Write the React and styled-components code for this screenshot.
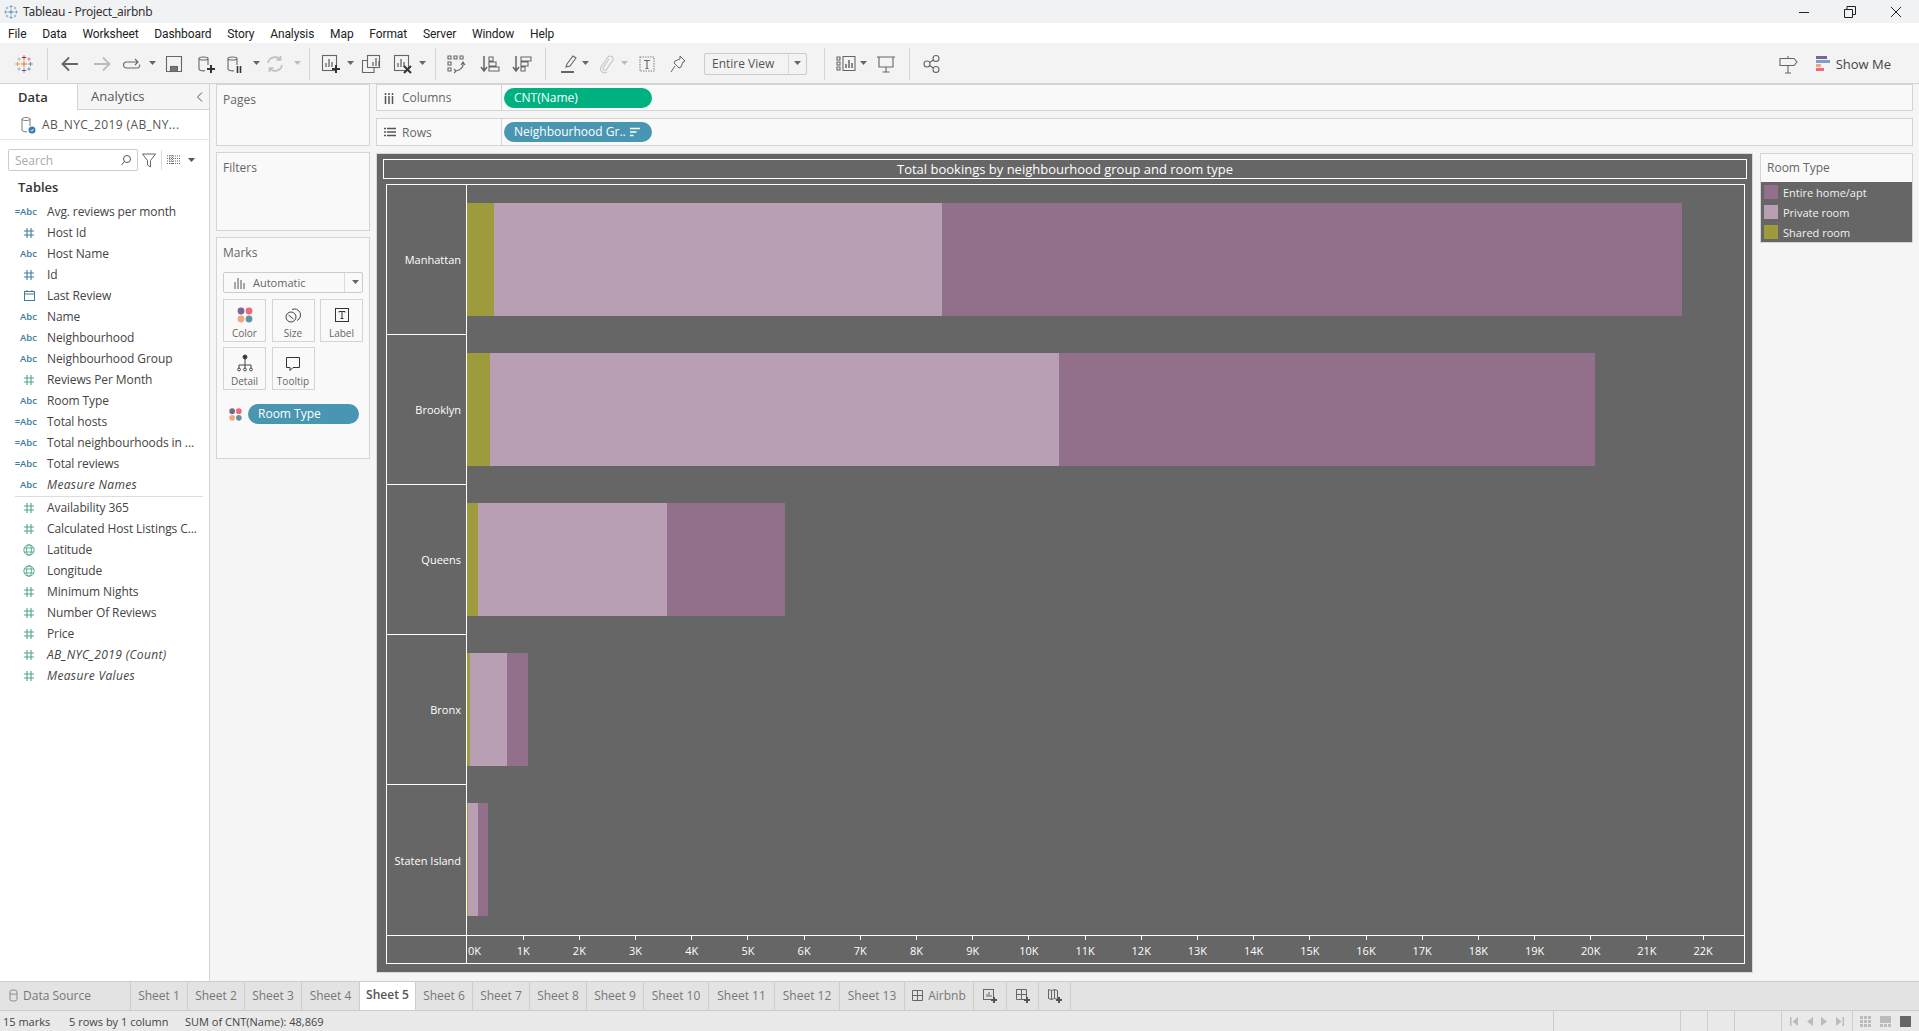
import React from 'react'
import styled, { createGlobalStyle } from 'styled-components'

const GlobalStyle = createGlobalStyle`
    html, body { margin: 0; padding: 0; height: 100%; overflow: hidden; }
    body { font-family: "Open Sans", "Liberation Sans", sans-serif; font-size: 12px; color: #444; }
    * { box-sizing: border-box; }
`
const PX_PER_K = 56.2
const BAR_PX_PER_K = 56.1
const COLORS = { entire: '#926f8b', priv: '#b99fb4', shared: '#9e9b3d' }

const Page = styled.div`
    width: 1919px;
    height: 1031px;
    display: flex;
    flex-direction: column;
    background: #f5f5f5;
    overflow: hidden;
`
/* title bar + menu */
const TitleBar = styled.div`
    height: 23px;
    flex: none;
    display: flex;
    align-items: center;
    background: #f1f2f3;
    padding-left: 3px;
    font-size: 12px;
    color: #333;
`
const TitleText = styled.span`
    margin-left: 4px;
    flex: 1;
    font-family: "Noto Sans", sans-serif;
    letter-spacing: -0.25px;
`
const WinButton = styled.div`
    width: 46px;
    height: 23px;
    display: flex;
    align-items: center;
    justify-content: center;
`
const MenuBar = styled.div`
    height: 20px;
    flex: none;
    background: #fff;
    display: flex;
    align-items: center;
    gap: 15.8px;
    padding: 2px 0 0 8px;
    font-family: "Roboto", sans-serif;
    font-size: 12px;
    letter-spacing: -0.1px;
    color: #222;
`
const Toolbar = styled.div`
    height: 41px;
    flex: none;
    display: flex;
    align-items: center;
    padding: 0 28px 0 14px;
    background: #f3f3f3;
`
const ToolSvg = styled.svg`
    flex: none;
    margin-left: ${props => props.$ml || 0}px;
`
const ToolSep = styled.div`
    flex: none;
    width: 1px;
    height: 32px;
    background: #d4d4d4;
    margin-left: ${props => props.$ml}px;
`
const FitSelect = styled.div`
    flex: none;
    width: 103px;
    height: 22px;
    margin-left: 16px;
    display: flex;
    align-items: center;
    border: 1px solid #ccc;
    border-radius: 2px;
    font-size: 12px;
    color: #555;
`
const FitText = styled.div`
    width: 84px;
    padding-left: 7px;
    line-height: 20px;
    border-right: 1px solid #d8d8d8;
`
const Spacer = styled.div`
    flex: 1;
`
const ShowMe = styled.div`
    display: flex;
    align-items: center;
    gap: 6px;
    margin-left: 17px;
    font-size: 13px;
    color: #444;
`
/* main three columns */
const Main = styled.div`
    flex: 1;
    min-height: 0;
    display: flex;
    border-top: 1px solid #d4d4d4;
    margin-top: -1px;
`
const Sidebar = styled.aside`
    width: 210px;
    flex: none;
    background: #fff;
    border-right: 1px solid #d4d4d4;
`
const SideTabs = styled.div`
    height: 26px;
    display: flex;
    align-items: center;
`
const SideTab = styled.div`
    height: 26px;
    width: ${props => props.$w}px;
    line-height: 25px;
    padding-left: ${props => props.$pad}px;
    font-size: 13px;
    font-weight: ${props => props.$active ? 600 : 400};
    color: ${props => props.$active ? '#333' : '#555'};
    background: ${props => props.$active ? '#fff' : '#f5f5f5'};
    border-bottom: ${props => props.$active ? 'none' : '1px solid #d4d4d4'};
    border-right: ${props => props.$active ? '1px solid #d4d4d4' : 'none'};
    flex: ${props => props.$grow ? 1 : 'none'};
    display: flex;
    justify-content: space-between;
    align-items: center;
    padding-right: 5px;
`
const SourceRow = styled.div`
    height: 30px;
    display: flex;
    align-items: center;
    padding-left: 21px;
    gap: 6px;
    border-bottom: 1px solid #e6e6e6;
    font-size: 12px;
    letter-spacing: 0.4px;
    color: #555;
`
const SearchRow = styled.div`
    display: flex;
    align-items: center;
    padding: 9px 0 0 8px;
`
const SearchBox = styled.div`
    width: 130px;
    height: 22px;
    border: 1px solid #ccc;
    border-radius: 2px;
    display: flex;
    align-items: center;
    justify-content: space-between;
    padding: 0 5px 0 6px;
    color: #aaa;
    font-size: 12px;
`
const SmallSep = styled.div`
    width: 1px;
    height: 20px;
    background: #ddd;
    margin: 0 5px 0 5px;
`
const TablesHead = styled.div`
    margin: 6px 0 4px 18px;
    height: 20px;
    line-height: 20px;
    font-size: 13px;
    font-weight: 600;
    color: #333;
`
const Field = styled.div`
    height: 21px;
    display: flex;
    align-items: center;
    font-size: 12px;
    color: #444;
    font-style: ${props => props.$italic ? 'italic' : 'normal'};
    letter-spacing: ${props => props.$italic ? '0.35px' : '-0.1px'};
    white-space: nowrap;
`
const FieldIcon = styled.div`
    width: 47px;
    padding-right: 10px;
    flex: none;
    display: flex;
    justify-content: flex-end;
    align-items: center;
    font-style: normal;
    letter-spacing: 0;
    font-size: 9.5px;
    font-weight: 600;
    color: #3f7c9b;
    white-space: pre;
`
const GlyphSlot = styled.div`
    width: 16px;
    display: flex;
    justify-content: center;
`
const FieldDivider = styled.div`
    height: 1px;
    margin: 1px 6px 0 15px;
    background: #ddd;
`
const CardColumn = styled.div`
    width: 154px;
    flex: none;
    margin-left: 6px;
    display: flex;
    flex-direction: column;
    gap: 6px;
`
const Card = styled.div`
    height: ${props => props.$h}px;
    flex: none;
    background: #f9f9f9;
    border: 1px solid #d4d4d4;
    padding: 5px 6px;
`
const CardTitle = styled.div`
    height: 20px;
    line-height: 20px;
    font-size: 12px;
    color: #666;
`
const MarkSelect = styled.div`
    margin-top: 9px;
    width: 140px;
    height: 21px;
    border: 1px solid #ccc;
    border-radius: 2px;
    display: flex;
    align-items: center;
    font-size: 11px;
    color: #666;
`
const MarkSelectText = styled.div`
    width: 121px;
    flex: none;
    height: 19px;
    display: flex;
    align-items: center;
    gap: 8px;
    padding-left: 10px;
    border-right: 1px solid #ddd;
`
const MarkGrid = styled.div`
    margin-top: 6px;
    display: grid;
    grid-template-columns: repeat(3, 43px);
    grid-auto-rows: 43px;
    gap: 5px 5.5px;
`
const MarkButton = styled.div`
    border: 1px solid #d4d4d4;
    display: flex;
    flex-direction: column;
    align-items: center;
    padding-top: 6px;
    font-size: 10px;
    line-height: 12px;
    color: #666;
    gap: 3px;
`
const EncodingRow = styled.div`
    margin: 14px 0 0 5px;
    display: flex;
    align-items: center;
    gap: 5px;
`
const Pill = styled.div`
    width: ${props => props.$w}px;
    height: 20px;
    border-radius: 10px;
    background: ${props => props.$color};
    color: #fff;
    font-size: 12px;
    line-height: 20px;
    padding-left: 10px;
    display: flex;
    align-items: center;
    gap: 4px;
    white-space: nowrap;
`
const Workspace = styled.div`
    flex: 1;
    min-width: 0;
    margin: 0 6px 0 6px;
    display: flex;
    flex-direction: column;
`
const Shelf = styled.div`
    height: ${props => props.$h}px;
    flex: none;
    margin-bottom: 7px;
    background: #f9f9f9;
    border: 1px solid #d4d4d4;
    display: flex;
    align-items: center;
`
const ShelfLabel = styled.div`
    width: 125px;
    height: 100%;
    border-right: 1px solid #d4d4d4;
    display: flex;
    align-items: center;
    padding-left: 7px;
    margin-right: 2px;
    font-size: 12px;
    color: #666;
`
const ShelfIcon = styled.div`
    width: 18px;
    flex: none;
    display: flex;
    align-items: center;
`
const ViewRow = styled.div`
    flex: 1;
    min-height: 0;
    display: flex;
    gap: 7px;
    padding-bottom: 8px;
`
const ViewPanel = styled.div`
    width: 1377px;
    flex: none;
    background: #666;
    border: 1px solid #d8d8d8;
    padding: 5px 5px 8px 6px;
    display: flex;
    flex-direction: column;
    gap: 5px;
    color: #fff;
`
const ChartTitle = styled.div`
    height: 20px;
    flex: none;
    border: 1px solid #fff;
    text-align: center;
    line-height: 18px;
    font-size: 13px;
`
const ChartFrame = styled.div`
    flex: 1;
    min-height: 0;
    margin: 0 2px 0 3px;
    border: 1px solid #fff;
    display: flex;
    flex-direction: column;
`
const ChartRow = styled.div`
    height: 150px;
    flex: none;
    display: flex;
`
const RowHeader = styled.div`
    width: 80px;
    flex: none;
    border-right: 1px solid #fff;
    border-bottom: ${props => props.$last ? 'none' : '1px solid #fff'};
    display: flex;
    align-items: center;
    justify-content: flex-end;
    padding-right: 5px;
    font-size: 11px;
    white-space: nowrap;
`
const Plot = styled.div`
    flex: 1;
    display: flex;
    align-items: center;
`
const Segment = styled.div`
    height: 113px;
    flex: none;
    margin-top: -1px;
    background: ${props => props.$color};
`
const AxisRow = styled.div`
    flex: 1;
    display: flex;
    border-top: 1px solid #fff;
`
const AxisHead = styled.div`
    width: 80px;
    flex: none;
    border-right: 1px solid #fff;
`
const AxisZero = styled.div`
    width: ${PX_PER_K / 2}px;
    flex: none;
    padding: 8px 0 0 1px;
    font-size: 11px;
    line-height: 14px;
`
const Tick = styled.div`
    width: ${PX_PER_K}px;
    flex: none;
    display: flex;
    flex-direction: column;
    align-items: center;
    font-size: 11px;
    line-height: 14px;
    gap: 4px;
    &::before {
        content: '';
        width: 1px;
        height: 4px;
        background: #fff;
    }
`
const Legend = styled.div`
    width: 153px;
    height: 90px;
    flex: none;
    border: 1px solid #d4d4d4;
    background: #f9f9f9;
`
const LegendHead = styled.div`
    height: 28px;
    line-height: 28px;
    padding-left: 6px;
    font-size: 12px;
    color: #666;
`
const LegendList = styled.div`
    background: #666;
    padding: 3px;
    display: flex;
    flex-direction: column;
    gap: 6px;
`
const LegendItem = styled.div`
    height: 14px;
    display: flex;
    align-items: center;
    gap: 5px;
    font-size: 11px;
    color: #f2f2f2;
`
const Swatch = styled.div`
    width: 14px;
    height: 14px;
    background: ${props => props.$color};
`
/* bottom */
const TabStrip = styled.div`
    height: 30px;
    flex: none;
    display: flex;
    background: #e3e3e3;
    border-top: 1px solid #ccc;
    border-bottom: 1px solid #ccc;
`
const SheetTab = styled.div`
    width: ${props => props.$w}px;
    flex: none;
    display: flex;
    align-items: center;
    justify-content: ${props => props.$left ? 'flex-start' : 'center'};
    gap: 5px;
    padding-left: ${props => props.$left ? 9 : 0}px;
    border-right: 1px solid #ccc;
    background: ${props => props.$active ? '#fff' : 'transparent'};
    color: ${props => props.$active ? '#555' : '#777'};
    font-weight: ${props => props.$active ? 600 : 400};
    font-size: 12px;
    padding-bottom: ${props => props.$active ? 3 : 1}px;
    white-space: nowrap;
`
const StatusBar = styled.div`
    height: 20px;
    flex: none;
    display: flex;
    align-items: center;
    background: #e9e9e9;
    font-size: 11px;
    color: #444;
    padding-left: 3px;
`
const StatusText = styled.span`
    width: ${props => props.$w}px;
    flex: none;
    white-space: nowrap;
`
const StatusCell = styled.div`
    width: ${props => props.$w}px;
    height: 20px;
    flex: none;
    border-left: 1px solid #ccc;
    display: flex;
    align-items: center;
    justify-content: space-around;
    padding: 0 ${props => props.$pad || 0}px;
`

const Ico = ({ ml, w = 20, h = 20, children, color = '#666', sw = 1.1 }) => (
    <ToolSvg $ml={ml} width={w} height={h} viewBox={`0 0 ${w} ${h}`} fill="none" stroke={color} strokeWidth={sw}>
        {children}
    </ToolSvg>
)
const Caret = ({ ml, color = '#666' }) => (
    <ToolSvg $ml={ml} width="7" height="5" viewBox="0 0 7 5"><path d="M0 0h7L3.5 4z" fill={color} /></ToolSvg>
)
const Db = ({ color = '#666' }) => (
    <path d="M3 4.500C3 2.500 12 2.500 12 4.500V11M3 4.500c0 2 9 2 9 0M3 4.500V15c0 1.500 3 2 6 1.800" stroke={color} />
)
const Plus = ({ x, y, s = 4 }) => (
    <path d={`M${x - s} ${y}h${2 * s}M${x} ${y - s}v${2 * s}`} stroke="#333" strokeWidth="2" />
)
const Bars = ({ x = 0, y = 0 }) => (
    <path d={`M${x + 5} ${y + 13}v-4M${x + 8} ${y + 13}v-8M${x + 11} ${y + 13}v-5`} strokeWidth="1.300" />
)

const crossList = [
    [10, 10, 3.2, 1, '#e8762c'], [10, 3.5, 2.2, .8, '#c72037'], [16.5, 10, 2.2, .8, '#5b879b'],
    [10, 16.5, 2.2, .8, '#5c6692'], [3.5, 10, 2.2, .8, '#eb912b'], [5, 5, 1.6, .6, '#7099a6'],
    [15, 5, 1.6, .6, '#c72037'], [15, 15, 1.6, .6, '#1f457e'], [5, 15, 1.6, .6, '#59879b'],
]
const TableauLogo = ({ ml, mono, size = 20 }) => (
    <ToolSvg $ml={ml} width={size} height={size} viewBox="0 0 20 20">
        {crossList.map(([x, y, r, t, c]) => (
            <path key={`${x}-${y}`} fill={mono || c} d={`M${x - t / 2} ${y - r}h${t}v${r * 2}h${-t}zM${x - r} ${y - t / 2}h${r * 2}v${t}h${-r * 2}z`} />
        ))}
    </ToolSvg>
)
const Dots = ({ size = 18 }) => (
    <ToolSvg width={size} height={size} viewBox="0 0 18 18">
        <circle cx="5" cy="5" r="3.4" fill="#7b6690" /><circle cx="13" cy="5" r="3.4" fill="#f2677b" />
        <circle cx="5" cy="13" r="3.4" fill="#f2a67a" /><circle cx="13" cy="13" r="3.4" fill="#5f94a3" />
    </ToolSvg>
)
const Hash = ({ color }) => (
    <ToolSvg width="10" height="10" viewBox="0 0 10 10" fill="none" stroke={color} strokeWidth="1.1">
        <path d="M3 0v10M7 0v10M0 3h10M0 7h10" />
    </ToolSvg>
)
const Globe = () => (
    <ToolSvg width="12" height="12" viewBox="0 0 12 12" fill="none" stroke="#4fa887" strokeWidth=".9">
        <circle cx="6" cy="6" r="5.2" /><ellipse cx="6" cy="6" rx="2.4" ry="5.2" /><path d="M1 4h10M1 8h10" />
    </ToolSvg>
)
const Calendar = () => (
    <ToolSvg width="11" height="11" viewBox="0 0 11 11" fill="none" stroke="#3f7c9b" strokeWidth="1">
        <rect x=".5" y="1.5" width="10" height="9" /><path d="M.5 4h10M3 0v2M8 0v2" />
    </ToolSvg>
)

const TEAL = '#3f7c9b'
const GREEN = '#4fa887'
const fieldsTop = [
    { t: 'Avg. reviews per month', i: '=Abc' }, { t: 'Host Id', hash: TEAL }, { t: 'Host Name', i: 'Abc' },
    { t: 'Id', hash: TEAL }, { t: 'Last Review', cal: true }, { t: 'Name', i: 'Abc' },
    { t: 'Neighbourhood', i: 'Abc' }, { t: 'Neighbourhood Group', i: 'Abc' }, { t: 'Reviews Per Month', hash: GREEN },
    { t: 'Room Type', i: 'Abc' }, { t: 'Total hosts', i: '=Abc' }, { t: 'Total neighbourhoods in ...', i: '=Abc' },
    { t: 'Total reviews', i: '=Abc' }, { t: 'Measure Names', i: 'Abc', italic: true },
]
const fieldsBottom = [
    { t: 'Availability 365', hash: GREEN }, { t: 'Calculated Host Listings C...', hash: GREEN },
    { t: 'Latitude', globe: true }, { t: 'Longitude', globe: true }, { t: 'Minimum Nights', hash: GREEN },
    { t: 'Number Of Reviews', hash: GREEN }, { t: 'Price', hash: GREEN },
    { t: 'AB_NYC_2019 (Count)', hash: GREEN, italic: true }, { t: 'Measure Values', hash: GREEN, italic: true },
]
const menus = ['File', 'Data', 'Worksheet', 'Dashboard', 'Story', 'Analysis', 'Map', 'Format', 'Server', 'Window', 'Help']
const rows = [
    { name: 'Manhattan', shared: 480, priv: 7982, entire: 13199 },
    { name: 'Brooklyn', shared: 413, priv: 10132, entire: 9559 },
    { name: 'Queens', shared: 198, priv: 3372, entire: 2096 },
    { name: 'Bronx', shared: 60, priv: 652, entire: 379 },
    { name: 'Staten Island', shared: 9, priv: 188, entire: 176 },
]
const legend = [['Entire home/apt', COLORS.entire], ['Private room', COLORS.priv], ['Shared room', COLORS.shared]]
const ticks = Array.from({ length: 22 }, (_, i) => i + 1)
const tabs = [
    ['Sheet 1', 57], ['Sheet 2', 57], ['Sheet 3', 57], ['Sheet 4', 58], ['Sheet 5', 56], ['Sheet 6', 57], ['Sheet 7', 57],
    ['Sheet 8', 57], ['Sheet 9', 57], ['Sheet 10', 65], ['Sheet 11', 66], ['Sheet 12', 65], ['Sheet 13', 65],
]

const FieldRow = ({ f }) => (
    <Field $italic={f.italic}>
        <FieldIcon>
            {f.i}
            {f.hash && <GlyphSlot><Hash color={f.hash} /></GlyphSlot>}
            {f.cal && <GlyphSlot><Calendar /></GlyphSlot>}
            {f.globe && <GlyphSlot><Globe /></GlyphSlot>}
        </FieldIcon>
        {f.t}
    </Field>
)
const Seg = ({ value, color }) => <Segment $color={color} style={{ width: (value / 1000) * BAR_PX_PER_K }} />

const App = () => {
    return (
        <Page>
            <GlobalStyle />
            <TitleBar>
                <TableauLogo mono="#3a7fb5" size={16} />
                <TitleText>Tableau - Project_airbnb</TitleText>
                <WinButton><svg width="12" height="12" fill="none" stroke="#222"><path d="M1 6.5h10" /></svg></WinButton>
                <WinButton><svg width="12" height="12" fill="none" stroke="#222"><path d="M.5 3.5h8v8h-8zM3 3V.5h8.500v8H9" /></svg></WinButton>
                <WinButton><svg width="12" height="12" fill="none" stroke="#222"><path d="M1 1l10 10M11 1L1 11" /></svg></WinButton>
            </TitleBar>
            <MenuBar>{menus.map(m => <span key={m}>{m}</span>)}</MenuBar>
            <Toolbar>
                <TableauLogo />
                <ToolSep $ml={13} />
                <Ico ml={12} sw={1.8}><path d="M18 10H3M9 3.500L2.500 10 9 16.500" /></Ico>
                <Ico ml={12} sw={1.8} color="#bbb"><path d="M2 10h15M11 3.500l6.500 6.500-6.500 6.500" /></Ico>
                <Ico ml={10}><path d="M13 5l3 3-3 3M16 8H4.500a2.500 2.500 0 0 0 0 6h11a2.500 2.500 0 0 0 2-3.500" /></Ico>
                <Caret ml={7} />
                <Ico ml={8}><path d="M2.500 2.500h15v15h-15z" /><rect x="6.500" y="12.500" width="7" height="5" fill="#777" /></Ico>
                <Ico ml={12}><Db /><Plus x={15} y={15} /></Ico>
                <Ico ml={9}><Db /><path d="M12.500 12v7M15.500 12v7" stroke="#333" strokeWidth="1.600" /></Ico>
                <Caret ml={8} />
                <Ico ml={5} color="#c0c0c0" sw={1.6}><path d="M3 9a7 7 0 0 1 12.500-3M17 11a7 7 0 0 1-12.500 3M15.500 2v4h-4M4.500 18v-4h4" /></Ico>
                <Caret ml={9} color="#bbb" />
                <ToolSep $ml={8} />
                <Ico ml={11}><rect x="1.500" y="1.500" width="14" height="15" /><Bars /><Plus x={15} y={15} /></Ico>
                <Caret ml={6} />
                <Ico ml={7}><rect x="6.500" y="1.500" width="12" height="12" /><Bars x={7} y={-1} /><path d="M6 6.500H1.500v12H13V14" /></Ico>
                <Ico ml={12}><rect x="1.500" y="1.500" width="14" height="15" /><Bars /><path d="M11 12l7 7M18 12l-7 7" stroke="#333" strokeWidth="2" /></Ico>
                <Caret ml={6} />
                <ToolSep $ml={9} />
                <Ico ml={10}><path d="M2 2h3v3H2zM8 2h3v3H8zM14 2h3v3h-3zM2 8h3v3H2zM2 14h3v3H2zM17 8c1 5-2 8-7 9M8 15l2 2-2 2M15 11l2-3 2 3" /></Ico>
                <Ico ml={14}><path d="M4 2v14M1 13l3 4 3-4" strokeWidth="1.500" /><path d="M9 3h4v4H9zM9 8h7v4H9zM9 13h10v4H9z" /></Ico>
                <Ico ml={12}><path d="M4 2v14M1 13l3 4 3-4" strokeWidth="1.500" /><path d="M9 3h10v4H9zM9 8h7v4H9zM9 13h4v4H9z" /></Ico>
                <ToolSep $ml={13} />
                <Ico ml={12}><path d="M8 13l1-3 6-8 3 2-6 8zM8 13l4-1" /><path d="M3 18h13" strokeWidth="2" /></Ico>
                <Caret ml={4} />
                <Ico ml={7} color="#c4c4c4"><path d="M13 5l-6 9a2 2 0 0 0 3 2l7-10a3 3 0 0 0-5-3L5 13a4 4 0 0 0 6 5" /></Ico>
                <Caret ml={5} color="#bbb" />
                <Ico ml={9}><rect x="3" y="3" width="14" height="14" strokeDasharray="1.500 1" stroke="#888" /><path d="M7 6.500h6M10 6.500v8M8.500 14.500h3" /></Ico>
                <Ico ml={11} sw={1}><path d="M12 2l5 5-2 1-2 5-2 1-5-5 1-2 5-2zM7 12l-4 6" /></Ico>
                <FitSelect>
                    <FitText>Entire View</FitText>
                    <ToolSvg $ml={5} width="7" height="5" viewBox="0 0 7 5"><path d="M0 0h7L3.5 4z" fill="#666" /></ToolSvg>
                </FitSelect>
                <ToolSep $ml={17} />
                <Ico ml={11}><path d="M1 3h3v3H1zM1 8h3v3H1zM1 13h3v3H1zM7 2.500h12v14H7z" /><path d="M10 14v-4M13 14V6M16 14v-5" strokeWidth="1.500" /></Ico>
                <Caret ml={4} />
                <Ico ml={9}><path d="M1 3h18M3 3v10h14V3M10 13v5M6.500 18h7" /></Ico>
                <ToolSep $ml={13} />
                <Ico ml={12}><circle cx="5" cy="10" r="3" /><circle cx="14" cy="4.500" r="3" /><circle cx="14" cy="15.500" r="3" /><path d="M7.500 8.500l4-2.500M7.500 11.500l4 2.500" /></Ico>
                <Spacer />
                <Ico><path d="M1 4.500h14l3 3.500-3 3.500H1zM9 2v2.500M9 11.500V19M6 19h6" /></Ico>
                <ShowMe>
                    <svg width="14" height="16" viewBox="0 0 14 16">
                        <rect y="0" width="11" height="3" fill="#7b6690" /><rect y="4" width="14" height="3" fill="#7c9fc9" />
                        <rect y="8" width="5" height="3" fill="#f2a67a" /><rect y="12" width="8" height="3" fill="#f2677b" />
                    </svg>
                    Show Me
                </ShowMe>
            </Toolbar>
            <Main>
                <Sidebar>
                    <SideTabs>
                        <SideTab $active $w={78} $pad={18}>Data</SideTab>
                        <SideTab $grow $pad={13}>
                            Analytics
                            <svg width="8" height="12" fill="none" stroke="#555"><path d="M6 1.500L1.500 6 6 10.500" /></svg>
                        </SideTab>
                    </SideTabs>
                    <SourceRow>
                        <svg width="15" height="18" viewBox="0 0 15 18" fill="none" stroke="#777">
                            <path d="M1 3c0-2 8-2 8 0v7M1 3c0 2 8 2 8 0M1 3v11c0 1.500 3 2 5 1.800" />
                            <circle cx="11" cy="14" r="3.500" fill="#2f7fb5" stroke="none" />
                            <path d="M9.500 14l1.200 1.200 2-2.200" stroke="#fff" />
                        </svg>
                        AB_NYC_2019 (AB_NY...
                    </SourceRow>
                    <SearchRow>
                        <SearchBox>
                            Search
                            <svg width="12" height="12" fill="none" stroke="#555"><circle cx="7" cy="5" r="3.500" /><path d="M4.500 7.500L1.500 11" /></svg>
                        </SearchBox>
                        <svg style={{ marginLeft: 4 }} width="14" height="15" fill="none" stroke="#666"><path d="M.5 1h13L8.500 7.500V14L5.500 12V7.500z" /></svg>
                        <SmallSep />
                        <svg width="13" height="10" stroke="#666"><path d="M0 1h13M0 3.500h13M0 6h13M0 8.500h13M3 0v10M5.500 0v10" strokeDasharray="1 1" /></svg>
                        <svg style={{ marginLeft: 8 }} width="7" height="5" viewBox="0 0 7 5"><path d="M0 0h7L3.500 4z" fill="#555" /></svg>
                    </SearchRow>
                    <TablesHead>Tables</TablesHead>
                    {fieldsTop.map(f => <FieldRow key={f.t} f={f} />)}
                    <FieldDivider />
                    {fieldsBottom.map(f => <FieldRow key={f.t} f={f} />)}
                </Sidebar>
                <CardColumn>
                    <Card $h={62}><CardTitle>Pages</CardTitle></Card>
                    <Card $h={79}><CardTitle>Filters</CardTitle></Card>
                    <Card $h={222}>
                        <CardTitle>Marks</CardTitle>
                        <MarkSelect>
                            <MarkSelectText>
                                <svg width="11" height="12" stroke="#555"><path d="M1 12V5M4 12V1M7 12V3M10 12V6" /></svg>
                                Automatic
                            </MarkSelectText>
                            <ToolSvg $ml={7} width="7" height="5" viewBox="0 0 7 5"><path d="M0 0h7L3.5 4z" fill="#666" /></ToolSvg>
                        </MarkSelect>
                        <MarkGrid>
                            <MarkButton><Dots />Color</MarkButton>
                            <MarkButton>
                                <svg width="18" height="18" fill="none" stroke="#444"><circle cx="7" cy="11" r="5" /><path d="M8 3.500a6 6 0 1 1 5 11M4.500 9l5 4" /></svg>
                                Size
                            </MarkButton>
                            <MarkButton>
                                <svg width="18" height="18" fill="none" stroke="#333"><rect x="2.500" y="2.500" width="13" height="13" /><path d="M6 6.500V5.500h6v1M9 5.500v7M7.500 12.500h3" /></svg>
                                Label
                            </MarkButton>
                            <MarkButton>
                                <svg width="18" height="18" fill="none" stroke="#444"><circle cx="9" cy="3" r="2" fill="#333" /><path d="M9 5v6M3 14v-3h12v3M9 11v3" /><circle cx="3" cy="15.500" r="1.400" /><circle cx="9" cy="15.500" r="1.400" /><circle cx="15" cy="15.500" r="1.400" /></svg>
                                Detail
                            </MarkButton>
                            <MarkButton>
                                <svg width="18" height="18" fill="none" stroke="#333"><path d="M2.500 3.500h13v10H9l-3 3v-3H2.500z" /></svg>
                                Tooltip
                            </MarkButton>
                        </MarkGrid>
                        <EncodingRow>
                            <Dots size={15} />
                            <Pill $w={111} $color="#4996b2">Room Type</Pill>
                        </EncodingRow>
                    </Card>
                </CardColumn>
                <Workspace>
                    <Shelf $h={27}>
                        <ShelfLabel>
                            <ShelfIcon>
                                <svg width="10" height="12" stroke="#555" strokeWidth="1.500"><path d="M1.500 12V4M5 12V4M8.500 12V4M1.500 3V1M5 3V1M8.500 3V1" /></svg>
                            </ShelfIcon>
                            Columns
                        </ShelfLabel>
                        <Pill $w={148} $color="#00b180">CNT(Name)</Pill>
                    </Shelf>
                    <Shelf $h={28}>
                        <ShelfLabel>
                            <ShelfIcon>
                                <svg width="12" height="10" stroke="#555" strokeWidth="1.300"><path d="M3 1.500h9M3 5h9M3 8.500h9M0 1.500h2M0 5h2M0 8.500h2" /></svg>
                            </ShelfIcon>
                            Rows
                        </ShelfLabel>
                        <Pill $w={148} $color="#4996b2">
                            Neighbourhood Gr..
                            <svg width="10" height="10" stroke="#fff" strokeWidth="1.500"><path d="M0 1.500h10M0 5h6.500M0 8.500h3.500" /></svg>
                        </Pill>
                    </Shelf>
                    <ViewRow>
                        <ViewPanel>
                            <ChartTitle>Total bookings by neighbourhood group and room type</ChartTitle>
                            <ChartFrame>
                                {rows.map((r, i) => (
                                    <ChartRow key={r.name}>
                                        <RowHeader $last={i === rows.length - 1}>{r.name}</RowHeader>
                                        <Plot>
                                            <Seg value={r.shared} color={COLORS.shared} />
                                            <Seg value={r.priv} color={COLORS.priv} />
                                            <Seg value={r.entire} color={COLORS.entire} />
                                        </Plot>
                                    </ChartRow>
                                ))}
                                <AxisRow>
                                    <AxisHead />
                                    <AxisZero>0K</AxisZero>
                                    {ticks.map(k => <Tick key={k}>{k}K</Tick>)}
                                </AxisRow>
                            </ChartFrame>
                        </ViewPanel>
                        <Legend>
                            <LegendHead>Room Type</LegendHead>
                            <LegendList>
                                {legend.map(([name, color]) => (
                                    <LegendItem key={name}><Swatch $color={color} />{name}</LegendItem>
                                ))}
                            </LegendList>
                        </Legend>
                    </ViewRow>
                </Workspace>
            </Main>
            <TabStrip>
                <SheetTab $w={131} $left>
                    <svg width="9" height="13" fill="none" stroke="#888"><path d="M1 2.500c0-2 7-2 7 0v8c0 2-7 2-7 0zM1 4.500c1 1 6 1 7 0" /></svg>
                    Data Source
                </SheetTab>
                {tabs.map(([name, w]) => <SheetTab key={name} $w={w} $active={name === 'Sheet 5'}>{name}</SheetTab>)}
                <SheetTab $w={69}>
                    <svg width="11" height="11" fill="none" stroke="#666"><path d="M.5.500h10v10H.5zM.5 5.500h10M5.500.500v10" /></svg>
                    Airbnb
                </SheetTab>
                <SheetTab $w={33}>
                    <svg width="16" height="16" fill="none" stroke="#666"><rect x="1.500" y="1.500" width="10" height="10" /><path d="M5 9V6M7 9V4M9 9V7" /><path d="M9 12h6M12 9v6" strokeWidth="2" stroke="#555" /></svg>
                </SheetTab>
                <SheetTab $w={32}>
                    <svg width="16" height="16" fill="none" stroke="#666"><path d="M1.500 1.500h10v10h-10zM1.500 6.500h10M6.500 1.500v10" /><path d="M9 12h6M12 9v6" strokeWidth="2" stroke="#555" /></svg>
                </SheetTab>
                <SheetTab $w={32}>
                    <svg width="16" height="16" fill="none" stroke="#666"><path d="M1.500 1.500l3 1 3-1 3 1v9l-3-1-3 1-3-1zM4.500 2.500v9M7.500 1.500v9" /><path d="M9 12h6M12 9v6" strokeWidth="2" stroke="#555" /></svg>
                </SheetTab>
            </TabStrip>
            <StatusBar>
                <StatusText $w={66}>15 marks</StatusText>
                <StatusText $w={116}>5 rows by 1 column</StatusText>
                <StatusText $w={1368}>SUM of CNT(Name): 48,869</StatusText>
                <StatusCell $w={127} />
                <StatusCell $w={27} />
                <StatusCell $w={27} />
                <StatusCell $w={47} />
                <StatusCell $w={71} $pad={4}>
                    <svg width="8" height="9" fill="#bbb"><path d="M0 0h1.500v9H0zM8 0v9L2.500 4.500z" /></svg>
                    <svg width="6" height="9" fill="#bbb"><path d="M6 0v9L0 4.500z" /></svg>
                    <svg width="6" height="9" fill="#bbb"><path d="M0 0v9l6-4.500z" /></svg>
                    <svg width="8" height="9" fill="#bbb"><path d="M6.500 0H8v9H6.500zM0 0v9l5.500-4.500z" /></svg>
                </StatusCell>
                <StatusCell $w={66} $pad={3}>
                    <svg width="11" height="11" fill="#bbb"><path d="M0 0h3v3H0zM4 0h3v3H4zM8 0h3v3H8zM0 4h3v3H0zM4 4h3v3H4zM8 4h3v3H8zM0 8h3v3H0zM4 8h3v3H4zM8 8h3v3H8z" /></svg>
                    <svg width="11" height="11" fill="#bbb"><path d="M0 0h11v7H0zM0 8h3v3H0zM4 8h3v3H4zM8 8h3v3H8z" /></svg>
                    <svg width="11" height="11" fill="#666"><path d="M0 0h11v11H0z" /></svg>
                </StatusCell>
            </StatusBar>
        </Page>
    )
}

export default App
